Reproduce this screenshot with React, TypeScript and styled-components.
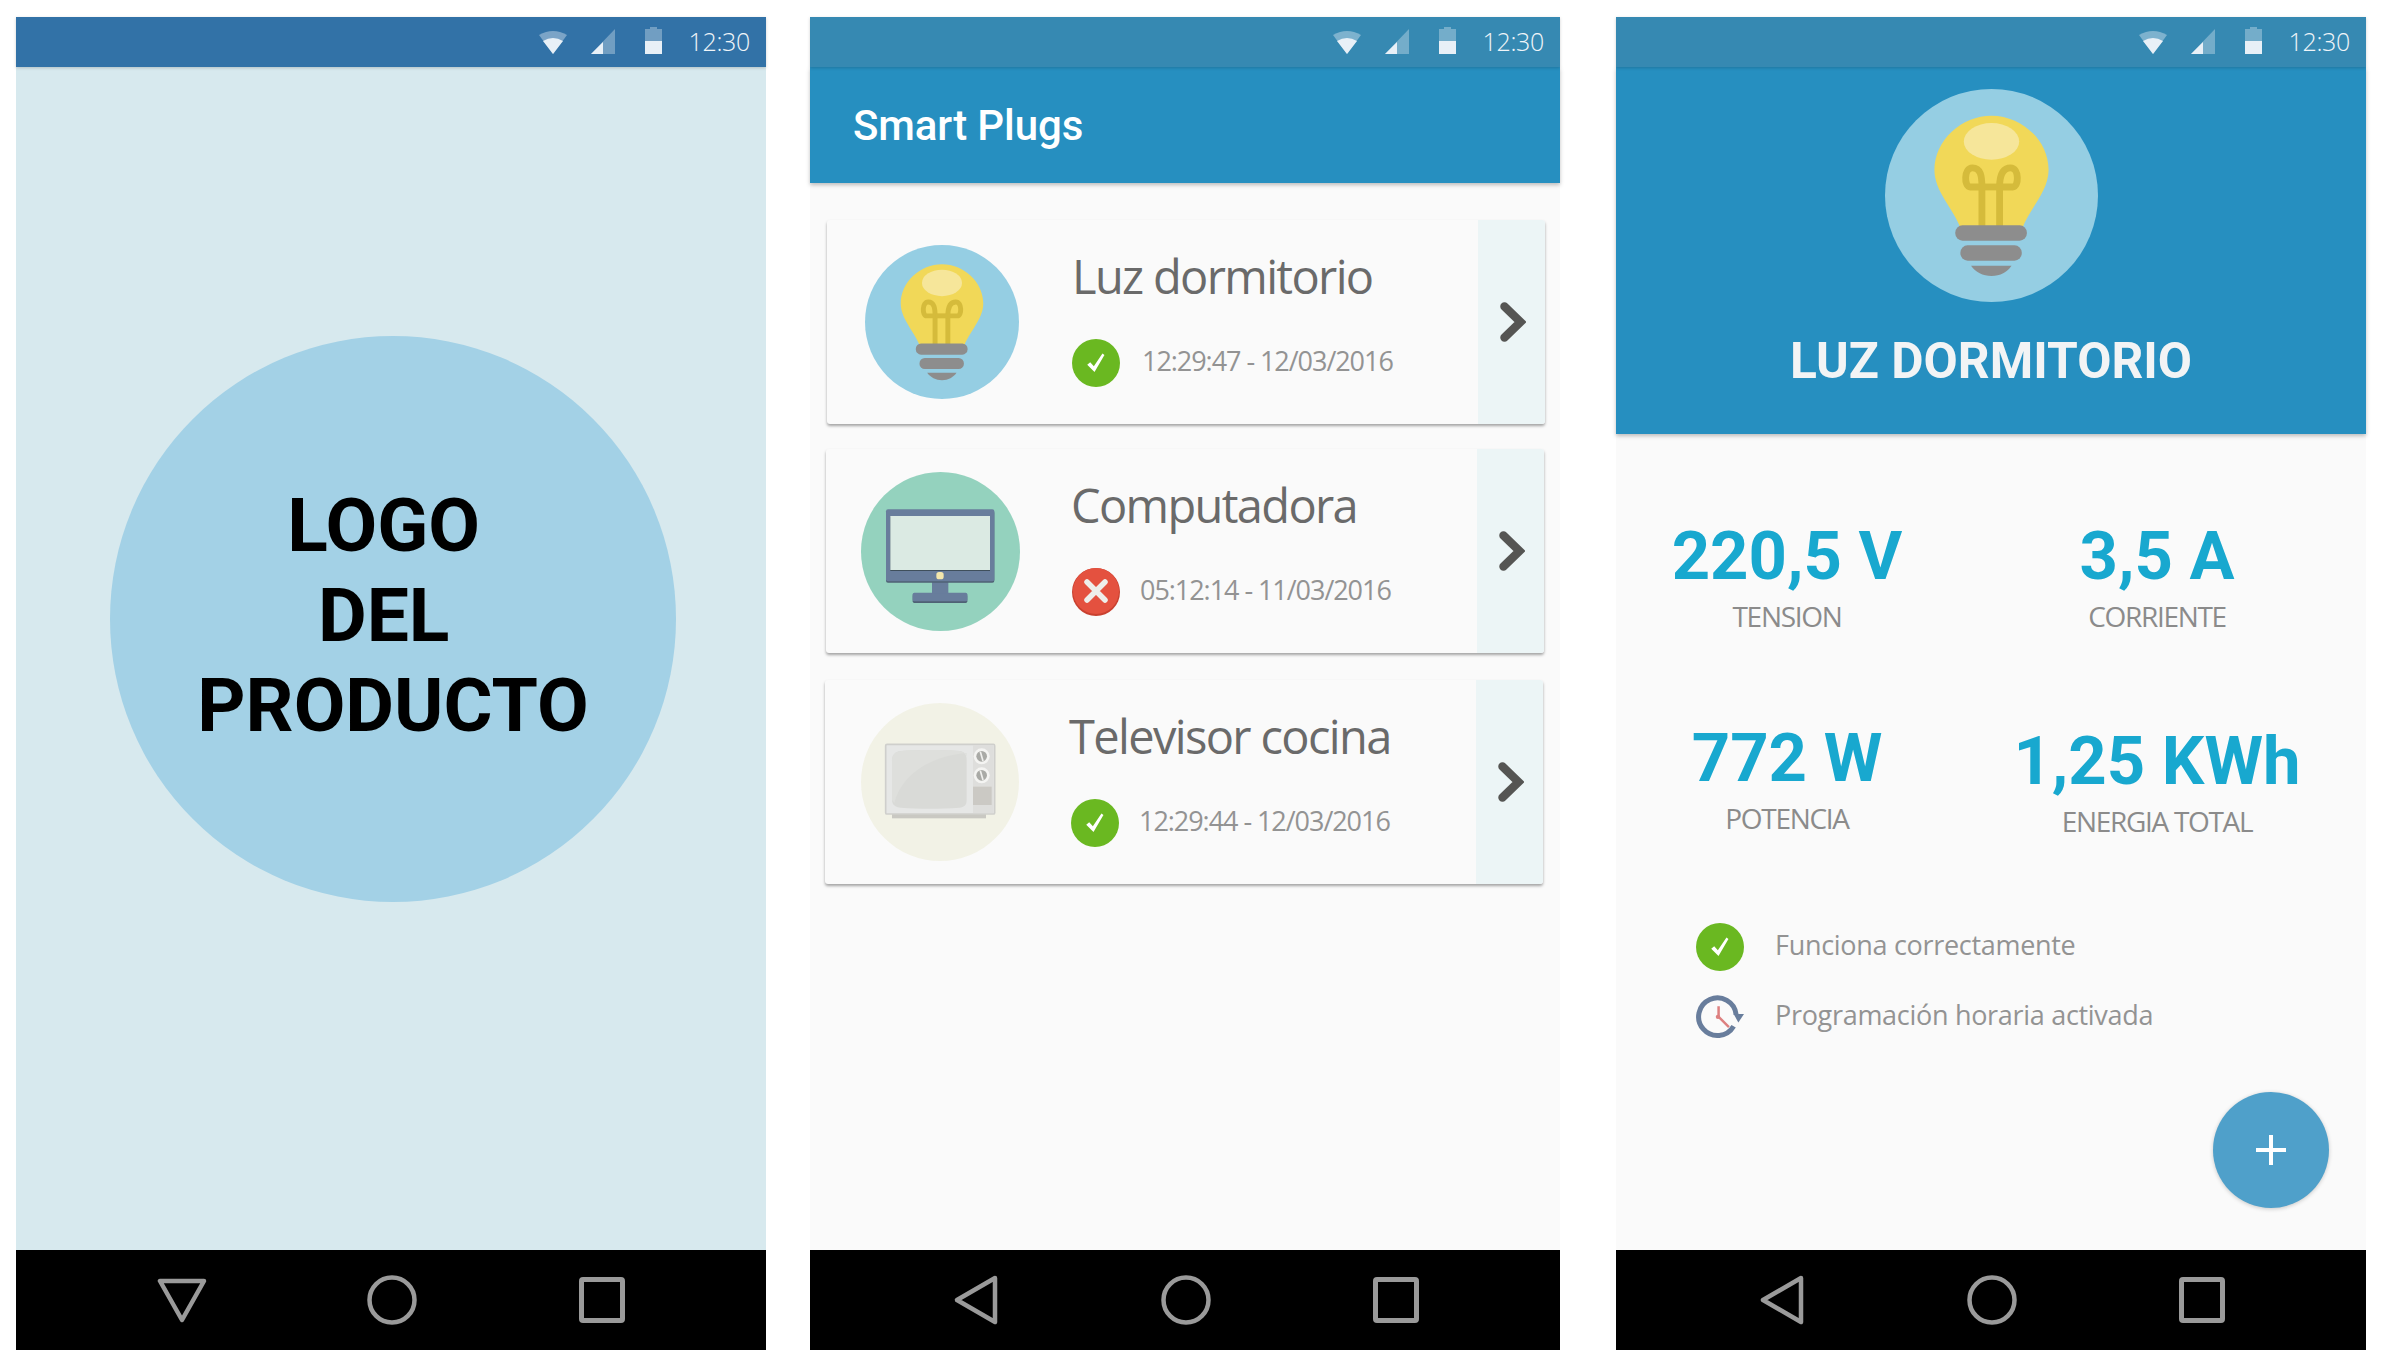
import styled, { createGlobalStyle } from "styled-components"

const GlobalStyle = createGlobalStyle`
    html, body {
        margin: 0;
        padding: 0;
        background: #fff;
    }
    * {
        box-sizing: border-box;
    }
`

function WifiIcon() {
    return (
        <StatusSvg width="28" height="25" viewBox="0 0 28 25">
            <path d="M14 25 L0 6 Q14 -2 28 6 Z" opacity=".4" />
            <path d="M14 25 L4 12 Q14 6 24 12 Z" />
        </StatusSvg>
    )
}

function SignalIcon() {
    return (
        <StatusSvg width="24" height="25" viewBox="0 0 24 25">
            <path d="M24 0 V25 H0 Z" opacity=".35" />
            <path d="M12 13 V25 H0 Z" />
        </StatusSvg>
    )
}

function BatteryIcon() {
    return (
        <StatusSvg width="17" height="27" viewBox="0 0 17 27">
            <path d="M5 0 H12 V2 H17 V27 H0 V2 H5 Z" opacity=".35" />
            <rect x="0" y="14" width="17" height="13" />
        </StatusSvg>
    )
}

function BackIcon() {
    return (
        <NavSvg width="46" height="52" viewBox="0 0 46 52">
            <path d="M42 4 L4 26 L42 48 Z" strokeWidth="4.5" strokeLinejoin="round" />
        </NavSvg>
    )
}

function DownIcon() {
    return (
        <NavSvg width="52" height="46" viewBox="0 0 52 46">
            <path d="M4 4 H48 L26 43 Z" strokeWidth="4.5" strokeLinejoin="round" />
        </NavSvg>
    )
}

function HomeIcon() {
    return (
        <NavSvg width="50" height="50" viewBox="0 0 50 50">
            <circle cx="25" cy="25" r="22.5" strokeWidth="4.5" />
        </NavSvg>
    )
}

function RecentIcon() {
    return (
        <NavSvg width="46" height="46" viewBox="0 0 46 46">
            <rect x="2.5" y="2.5" width="41" height="41" rx="1.5" strokeWidth="5" />
        </NavSvg>
    )
}

function BulbIcon({ size }: { size: number }) {
    return (
        <svg width={size} height={size} viewBox="0 0 100 100">
            <circle cx="50" cy="50" r="50" fill="#95cee3" />
            <path d="M50 12.5 C36 12.5 23.2 24 23.2 38 C23.2 48 32 56 35.4 65 H64.6 C68 56 76.8 48 76.8 38 C76.8 24 64 12.5 50 12.5 Z" fill="#f1d858" />
            <ellipse cx="50" cy="24.6" rx="13" ry="8.6" fill="#f6e69a" />
            <g fill="none" stroke="#d5bb3b" strokeWidth="3.2">
                <path d="M45.5 65 V46 H40 C37 46 37 37 41 37 C45 37 45.5 41 45.5 46" />
                <path d="M53.8 65 V46 H60 C63 46 63 37 59 37 C55 37 53.8 41 53.8 46" />
                <path d="M45.5 46 H53.8" />
            </g>
            <rect x="33" y="64" width="33.6" height="7.2" rx="3.4" fill="#8d8d8d" />
            <rect x="35.4" y="73.4" width="28.8" height="7.2" rx="3.4" fill="#8d8d8d" />
            <path d="M40.4 83 H59.4 C57.5 86 54 87.8 50 87.8 C46 87.8 42.4 86 40.4 83 Z" fill="#8d8d8d" />
        </svg>
    )
}

function MonitorIcon({ size }: { size: number }) {
    return (
        <svg width={size} height={size} viewBox="0 0 477 477">
            <circle cx="238.5" cy="238.5" r="238.5" fill="#94d2be" />
            <rect x="155" y="366" width="164" height="27" rx="5" fill="#4f6275" />
            <rect x="155" y="362" width="164" height="26" rx="5" fill="#687d9c" />
            <rect x="213" y="326" width="49" height="38" fill="#687d9c" />
            <rect x="75" y="116" width="325" height="216" rx="6" fill="#4f6275" />
            <rect x="75" y="112" width="325" height="216" rx="6" fill="#687d9c" />
            <rect x="88" y="134" width="299" height="163" fill="#3f4f5c" />
            <rect x="88" y="132" width="299" height="162" fill="#dbeae3" />
            <rect x="226" y="300" width="22" height="22" rx="8" fill="#f3e7ac" />
        </svg>
    )
}

function TvIcon({ size }: { size: number }) {
    return (
        <svg width={size} height={size} viewBox="0 0 474 474">
            <circle cx="237" cy="237" r="237" fill="#f2f2e6" />
            <rect x="93" y="330" width="282" height="16" fill="#c9c8c2" />
            <rect x="74" y="124" width="327" height="209" rx="4" fill="#e6e7e6" stroke="#cfcfcc" strokeWidth="5" />
            <rect x="336" y="126" width="62" height="204" fill="#dededc" />
            <path d="M120 144 C170 140 240 140 295 144 C312 146 317 156 317 172 V290 C317 306 310 312 295 314 C240 318 170 318 120 314 C102 312 93 304 93 290 V172 C93 156 102 146 120 144 Z" fill="#d9dad7" />
            <path d="M100 300 C120 220 200 160 317 150 V160 C310 146 300 146 295 144 C240 140 170 140 120 144 C102 146 93 156 93 172 V290 Z" fill="#dedfdc" />
            <circle cx="362" cy="160" r="24" fill="#f4f4f2" />
            <circle cx="362" cy="160" r="16" fill="#a9aaa6" />
            <path d="M358 146 L366 174" stroke="#f0f0ee" strokeWidth="5" />
            <circle cx="362" cy="217" r="24" fill="#f4f4f2" />
            <circle cx="362" cy="217" r="16" fill="#a9aaa6" />
            <path d="M358 203 L366 231" stroke="#f0f0ee" strokeWidth="5" />
            <rect x="336" y="251" width="56" height="55" fill="#cbc9c4" />
        </svg>
    )
}

function OkIcon() {
    return (
        <svg width="48" height="48" viewBox="0 0 145 145">
            <circle cx="72.5" cy="72.5" r="72.5" fill="#6ab821" />
            <path d="M46 78 L55 70 L66 82 L92 44 L98 48 L68 100 Z" fill="#fff" />
        </svg>
    )
}

function ErrorIcon() {
    return (
        <svg width="48" height="48" viewBox="0 0 48 48">
            <circle cx="24" cy="24" r="24" fill="#c9402f" />
            <circle cx="24" cy="23" r="23" fill="#e4513f" />
            <path d="M15 14 L33 32 M33 14 L15 32" stroke="#eeeeea" strokeWidth="5.5" strokeLinecap="round" />
        </svg>
    )
}

function ScheduleIcon() {
    return (
        <svg width="53" height="50" viewBox="0 0 153 145">
            <path d="M128 65 A60 60 0 1 0 120 102" fill="none" stroke="#687d9c" strokeWidth="16" />
            <path d="M120 63 H153 L135 90 Z" fill="#687d9c" />
            <path d="M72 38 V72 L105 105" fill="none" stroke="#dd8080" strokeWidth="8" />
            <circle cx="70" cy="72" r="7" fill="#dd8080" />
        </svg>
    )
}

function ChevronIcon() {
    return (
        <svg width="26" height="40" viewBox="0 0 26 40">
            <path d="M4.5 4.5 L20.5 20 L4.5 35.5" fill="none" stroke="#555553" strokeWidth="8.5" strokeLinecap="round" />
        </svg>
    )
}

function StatusBar({ $bg, $pad }: { $bg: string; $pad: number }) {
    return (
        <Status $bg={$bg} $pad={$pad}>
            <WifiIcon />
            <SignalIcon />
            <BatteryIcon />
            <Clock>12:30</Clock>
        </Status>
    )
}

function NavBar({ down }: { down?: boolean }) {
    return (
        <Nav>
            <NavSlot>{down ? <DownIcon /> : <BackIcon />}</NavSlot>
            <NavSlot><HomeIcon /></NavSlot>
            <NavSlot><RecentIcon /></NavSlot>
        </Nav>
    )
}

const plugs = [
    { id: 1, name: "Luz dormitorio", time: "12:29:47 - 12/03/2016", ok: true, icon: <BulbIcon size={154} />, left: 17, top: 37, thumb: 38, gap: 53, stateLeft: 0, timeGap: 22 },
    { id: 2, name: "Computadora", time: "05:12:14 - 11/03/2016", ok: false, icon: <MonitorIcon size={159} />, left: 16, top: 25, thumb: 35, gap: 51, stateLeft: 1, timeGap: 20 },
    { id: 3, name: "Televisor cocina", time: "12:29:44 - 12/03/2016", ok: true, icon: <TvIcon size={158} />, left: 15, top: 27, thumb: 36, gap: 50, stateLeft: 2, timeGap: 20 },
]

export default function App() {
    return (
        <>
            <GlobalStyle />
            <Page>
                <Screen>
                    <StatusBar $bg="#3272a7" $pad={16} />
                    <LogoBody>
                        <LogoCircle>
                            LOGO&nbsp;<br />
                            DEL&nbsp;<br />
                            PRODUCTO
                        </LogoCircle>
                    </LogoBody>
                    <NavBar down />
                </Screen>

                <Screen>
                    <StatusBar $bg="#3689b2" $pad={16} />
                    <AppBar>Smart Plugs</AppBar>
                    <PlugList>
                        {plugs.map(plug => (
                            <Card key={plug.id} $left={plug.left} $top={plug.top}>
                                <Thumb $left={plug.thumb} $gap={plug.gap}>{plug.icon}</Thumb>
                                <CardBody>
                                    <PlugName>{plug.name}</PlugName>
                                    <PlugState $left={plug.stateLeft} $gap={plug.timeGap}>
                                        {plug.ok ? <OkIcon /> : <ErrorIcon />}
                                        <PlugTime>{plug.time}</PlugTime>
                                    </PlugState>
                                </CardBody>
                                <CardArrow><ChevronIcon /></CardArrow>
                            </Card>
                        ))}
                    </PlugList>
                    <NavBar />
                </Screen>

                <Screen>
                    <StatusBar $bg="#3689b2" $pad={16} />
                    <DetailHeader>
                        <BulbIcon size={213} />
                        <DetailTitle>LUZ DORMITORIO</DetailTitle>
                    </DetailHeader>
                    <DetailBody>
                        <Metrics>
                            <Metric>
                                <MetricValue>220,5 V</MetricValue>
                                <MetricLabel>TENSION</MetricLabel>
                            </Metric>
                            <Metric>
                                <MetricValue>3,5 A</MetricValue>
                                <MetricLabel>CORRIENTE</MetricLabel>
                            </Metric>
                            <Metric>
                                <MetricValue>772 W</MetricValue>
                                <MetricLabel>POTENCIA</MetricLabel>
                            </Metric>
                            <Metric $drop={3}>
                                <MetricValue>1,25 KWh</MetricValue>
                                <MetricLabel>ENERGIA TOTAL</MetricLabel>
                            </Metric>
                        </Metrics>
                        <Notes>
                            <Note>
                                <NoteIcon><OkIcon /></NoteIcon>
                                <NoteText>Funciona correctamente</NoteText>
                            </Note>
                            <Note>
                                <NoteIcon><ScheduleIcon /></NoteIcon>
                                <NoteText>Programación horaria activada</NoteText>
                            </Note>
                        </Notes>
                        <Fab aria-label="Añadir">
                            <svg width="30" height="30" viewBox="0 0 30 30">
                                <path d="M15 0 V30 M0 15 H30" stroke="#fff" strokeWidth="4" />
                            </svg>
                        </Fab>
                    </DetailBody>
                    <NavBar />
                </Screen>
            </Page>
        </>
    )
}

const Page = styled.div`
    width: 2396px;
    height: 1350px;
    padding: 17px 0 0 16px;
    display: flex;
    align-items: stretch;
    overflow: hidden;
`

const Screen = styled.div`
    width: 750px;
    height: 1333px;
    display: flex;
    flex-direction: column;
    background-color: #fafafa;

    &:nth-child(2) {
        margin-left: 44px;
    }

    &:nth-child(3) {
        margin-left: 56px;
    }
`

const Status = styled.div<{ $bg: string; $pad: number }>`
    height: 50px;
    flex-shrink: 0;
    display: flex;
    justify-content: flex-end;
    align-items: flex-start;
    padding: 12px ${p => p.$pad}px 0 0;
    background-color: ${p => p.$bg};
    position: relative;
    z-index: 1;
    box-shadow: 0 1px 3px rgba(0, 0, 0, 0.18);

    & > svg:nth-child(2) {
        margin-left: 24px;
    }

    & > svg:nth-child(3) {
        margin-left: 30px;
        margin-top: -2px;
    }
`

const StatusSvg = styled.svg`
    fill: #e8f0f7;
    flex-shrink: 0;
`

const Clock = styled.span`
    margin-left: 26px;
    font-family: "Open Sans", sans-serif;
    font-weight: 300;
    font-size: 25px;
    line-height: 24px;
    letter-spacing: -0.3px;
    color: #f0f5f9;
`

const Nav = styled.div`
    height: 100px;
    flex-shrink: 0;
    margin-top: auto;
    display: flex;
    align-items: center;
    gap: 150px;
    padding-left: 136px;
    background-color: #000;
`

const NavSlot = styled.div`
    width: 60px;
    display: flex;
    justify-content: center;
`

const NavSvg = styled.svg`
    fill: none;
    stroke: #9a9a9a;
`

const LogoBody = styled.div`
    flex: 1;
    padding: 269px 0 0 94px;
    background-color: #d7e9ee;
`

const LogoCircle = styled.div`
    width: 566px;
    height: 566px;
    padding-top: 144px;
    border-radius: 50%;
    text-align: center;
    background-color: #a3d1e6;
    font-family: Roboto, sans-serif;
    font-weight: 700;
    font-size: 75px;
    line-height: 90px;
    color: #000;
`

const AppBar = styled.div`
    height: 116px;
    flex-shrink: 0;
    display: flex;
    align-items: center;
    padding-left: 43px;
    background-color: #268fc0;
    box-shadow: 0 2px 4px rgba(0, 0, 0, 0.25);
    font-family: Roboto, sans-serif;
    font-weight: 500;
    font-size: 42px;
    letter-spacing: -0.1px;
    color: #fff;
`

const PlugList = styled.div`
    display: flex;
    flex-direction: column;
`

const Card = styled.div<{ $left: number; $top: number }>`
    width: 718px;
    height: 204px;
    margin: ${p => p.$top}px 0 0 ${p => p.$left}px;
    display: flex;
    align-items: center;
    background-color: #fafafa;
    border-radius: 3px;
    box-shadow: 0 2px 3px rgba(0, 0, 0, 0.35);
    overflow: hidden;
`

const Thumb = styled.div<{ $left: number; $gap: number }>`
    flex-shrink: 0;
    display: flex;
    margin: 0 ${p => p.$gap}px 0 ${p => p.$left}px;
`

const CardBody = styled.div`
    flex: 1;
    display: flex;
    flex-direction: column;
    gap: 35px;
    margin-bottom: 9px;
`

const PlugName = styled.div`
    font-family: "Open Sans", sans-serif;
    font-weight: 400;
    font-size: 47px;
    line-height: 56px;
    letter-spacing: -1.65px;
    color: #6a6a6a;
`

const PlugState = styled.div<{ $left: number; $gap: number }>`
    display: flex;
    align-items: center;
    margin-left: ${p => p.$left}px;
    gap: ${p => p.$gap}px;
`

const PlugTime = styled.span`
    margin-bottom: 6px;
    font-family: "Open Sans", sans-serif;
    font-weight: 400;
    font-size: 27px;
    letter-spacing: -1.05px;
    color: #939393;
`

const CardArrow = styled.div`
    width: 67px;
    align-self: stretch;
    flex-shrink: 0;
    display: flex;
    align-items: center;
    justify-content: center;
    padding-left: 2px;
    background-color: #ecf5f6;
`

const DetailHeader = styled.div`
    height: 367px;
    flex-shrink: 0;
    display: flex;
    flex-direction: column;
    align-items: center;
    padding-top: 22px;
    background-color: #268fc0;
    box-shadow: 0 2px 4px rgba(0, 0, 0, 0.25);
`

const DetailTitle = styled.div`
    margin-top: 29px;
    font-family: Roboto, sans-serif;
    font-weight: 700;
    font-size: 49.7px;
    line-height: 60px;
    color: #f2f4f5;
`

const DetailBody = styled.div`
    flex: 1;
    position: relative;
    padding-top: 88px;
`

const Metrics = styled.div`
    display: grid;
    grid-template-columns: 342px 398px;
    row-gap: 89px;
`

const Metric = styled.div<{ $drop?: number }>`
    display: flex;
    flex-direction: column;
    align-items: center;
    margin-top: ${p => p.$drop || 0}px;
`

const MetricValue = styled.div`
    font-family: Roboto, sans-serif;
    font-weight: 700;
    font-size: 67px;
    line-height: 68px;
    color: #18a8cf;
`

const MetricLabel = styled.div`
    margin-top: 7px;
    font-family: "Open Sans", sans-serif;
    font-weight: 400;
    font-size: 28px;
    line-height: 38px;
    letter-spacing: -1.3px;
    color: #8b8b8b;
`

const Notes = styled.div`
    margin-top: 83px;
    padding-left: 80px;
    display: flex;
    flex-direction: column;
    gap: 22px;
`

const Note = styled.div`
    display: flex;
    align-items: center;
    gap: 31px;
    height: 48px;
`

const NoteIcon = styled.div`
    width: 48px;
    display: flex;
    justify-content: center;
`

const NoteText = styled.span`
    margin-bottom: 6px;
    font-family: "Open Sans", sans-serif;
    font-weight: 400;
    font-size: 27px;
    letter-spacing: -0.3px;
    color: #939393;
`

const Fab = styled.button`
    position: absolute;
    right: 37px;
    bottom: 42px;
    width: 116px;
    height: 116px;
    padding: 0;
    border: 0;
    border-radius: 50%;
    display: flex;
    align-items: center;
    justify-content: center;
    background-color: #4fa0ca;
    box-shadow: 0 1px 4px rgba(0, 0, 0, 0.2);
`
